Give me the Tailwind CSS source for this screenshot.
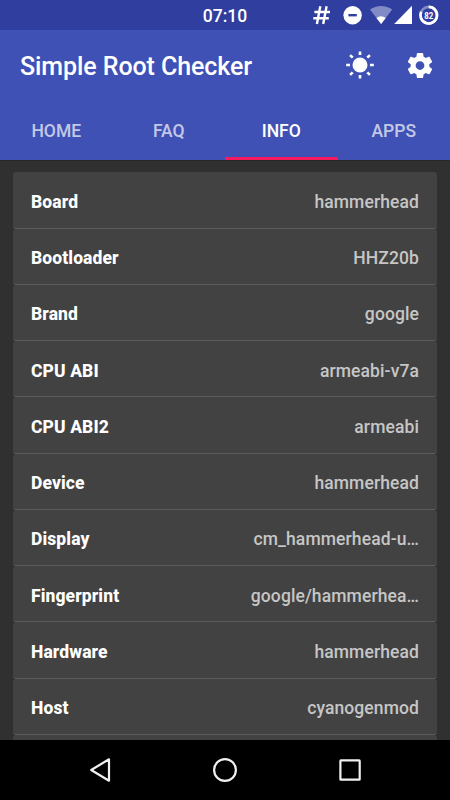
<!DOCTYPE html>
<html lang="en">
<head>
<meta charset="utf-8">
<title>Simple Root Checker</title>
<script src="https://cdn.jsdelivr.net/npm/@tailwindcss/browser@4"></script>
</head>
<body class="bg-black">
<div class="flex h-[800px] w-[450px] flex-col overflow-hidden bg-[#303030] font-['Roboto',sans-serif]">
  <div class="grid h-[30px] shrink-0 grid-cols-[1fr_auto_1fr] items-center bg-[#303f9f] text-white">
    <span></span>
    <span class="pt-[2px] text-[17.5px] leading-[28px] font-medium">07:10</span>
    <svg class="ml-auto h-[30px] w-[150px]" viewBox="300 0 150 30" fill="none">
      <path d="M320.3 6.3 316.9 24M326.6 6.3 323.2 24M314.4 12H330M313.3 18.3H328.8" stroke="#fff" stroke-width="2.4"/>
      <circle cx="352.6" cy="15.2" r="9.2" fill="#fff"/>
      <path d="M348.4 15.2H356.8" stroke="#303f9f" stroke-width="2.4"/>
      <path d="M370 9.6C376.5 4.7 385.7 4.7 392.2 9.6L381.1 24Z" fill="#fff" fill-opacity=".4"/>
      <path d="M376.5 17.9Q381.1 14.5 385.7 17.9L381.1 24Z" fill="#fff"/>
      <path d="M394.2 24H412V5.8Z" fill="#fff"/>
      <circle cx="428.7" cy="15.2" r="8.3" stroke="#fff" stroke-opacity=".4" stroke-width="2.6"/>
      <path d="M428.7 6.9A8.3 8.3 0 1 1 421.2 11.7" stroke="#fff" stroke-width="2.7"/>
      <text x="428.7" y="18.6" text-anchor="middle" fill="#fff" font-size="9.5" font-weight="700" textLength="9" lengthAdjust="spacingAndGlyphs" class="font-['Roboto',sans-serif]">82</text>
    </svg>
  </div>
  <header class="flex h-[130px] shrink-0 flex-col bg-[#3f51b5] text-white">
    <div class="flex h-[71px] items-center pr-[15px] pl-5">
      <h1 class="pt-[2px] text-[25px] leading-[30px] font-medium tracking-[-0.08px] whitespace-nowrap">Simple Root Checker</h1>
      <svg class="ml-auto h-[30px] w-[30px]" viewBox="-15 -14 30 30" stroke="#fff" stroke-width="2.6">
        <circle r="7.5" fill="#fff" stroke="none"/>
        <path d="M0-13.6V-10M0 13.6V10M-13.8 0H-10M13.8 0H10M-9.9-9.9-7.3-7.3M9.9 9.9 7.3 7.3M-9.9 9.9-7.3 7.3M9.9-9.9 7.3-7.3"/>
      </svg>
      <svg class="ml-[30px] h-[30px] w-[30px]" viewBox="0 .4 24 24" fill="#fff"><path d="M19.43 12.98c.04-.32.07-.64.07-.98s-.03-.66-.07-.98l2.11-1.65c.19-.15.24-.42.12-.64l-2-3.46c-.12-.22-.39-.3-.61-.22l-2.49 1c-.52-.4-1.08-.73-1.69-.98l-.38-2.65C14.46 2.18 14.25 2 14 2h-4c-.25 0-.46.18-.49.42l-.38 2.65c-.61.25-1.17.59-1.69.98l-2.49-1c-.23-.09-.49 0-.61.22l-2 3.46c-.13.22-.07.49.12.64l2.11 1.65c-.04.32-.07.65-.07.98s.03.66.07.98l-2.11 1.65c-.19.15-.24.42-.12.64l2 3.46c.12.22.39.3.61.22l2.49-1c.52.4 1.08.73 1.69.98l.38 2.65c.03.24.24.42.49.42h4c.25 0 .46-.18.49-.42l.38-2.65c.61-.25 1.17-.59 1.69-.98l2.49 1c.23.09.49 0 .61-.22l2-3.46c.12-.22.07-.49-.12-.64l-2.11-1.65zM12 15.5c-1.93 0-3.5-1.57-3.5-3.5s1.57-3.5 3.5-3.5 3.5 1.57 3.5 3.5-1.57 3.5-3.5 3.5z"/></svg>
    </div>
    <nav class="grid h-[59px] grid-cols-4 text-center text-[17.5px] leading-[56px] font-medium text-white/70">
      <span class="pt-[2px]">HOME</span><span class="pt-[2px]">FAQ</span><span class="h-[59px] border-b-[3px] border-[#f5195f] pt-[2px] text-white">INFO</span><span class="pt-[2px]">APPS</span>
    </nav>
  </header>
  <main class="min-h-0 grow overflow-hidden border-t border-[#282824] px-[13px] pt-[11.25px] text-[17.5px] leading-5 font-medium tracking-[0.1px] text-[#c6c6c6]">
    <div class="flex h-[56.25px] items-center justify-between rounded-[3px] border-b border-[#5c5c5c] bg-[#424242] px-[18px] pt-[4px]"><b class="font-extrabold text-white">Board</b><span>hammerhead</span></div>
    <div class="flex h-[56.25px] items-center justify-between rounded-[3px] border-b border-[#5c5c5c] bg-[#424242] px-[18px] pt-[4px]"><b class="font-extrabold text-white">Bootloader</b><span>HHZ20b</span></div>
    <div class="flex h-[56.25px] items-center justify-between rounded-[3px] border-b border-[#5c5c5c] bg-[#424242] px-[18px] pt-[4px]"><b class="font-extrabold text-white">Brand</b><span>google</span></div>
    <div class="flex h-[56.25px] items-center justify-between rounded-[3px] border-b border-[#5c5c5c] bg-[#424242] px-[18px] pt-[4px]"><b class="font-extrabold text-white">CPU ABI</b><span>armeabi-v7a</span></div>
    <div class="flex h-[56.25px] items-center justify-between rounded-[3px] border-b border-[#5c5c5c] bg-[#424242] px-[18px] pt-[4px]"><b class="font-extrabold text-white">CPU ABI2</b><span>armeabi</span></div>
    <div class="flex h-[56.25px] items-center justify-between rounded-[3px] border-b border-[#5c5c5c] bg-[#424242] px-[18px] pt-[4px]"><b class="font-extrabold text-white">Device</b><span>hammerhead</span></div>
    <div class="flex h-[56.25px] items-center justify-between rounded-[3px] border-b border-[#5c5c5c] bg-[#424242] px-[18px] pt-[4px]"><b class="font-extrabold text-white">Display</b><span>cm_hammerhead-u…</span></div>
    <div class="flex h-[56.25px] items-center justify-between rounded-[3px] border-b border-[#5c5c5c] bg-[#424242] px-[18px] pt-[4px]"><b class="font-extrabold text-white">Fingerprint</b><span>google/hammerhea…</span></div>
    <div class="flex h-[56.25px] items-center justify-between rounded-[3px] border-b border-[#5c5c5c] bg-[#424242] px-[18px] pt-[4px]"><b class="font-extrabold text-white">Hardware</b><span>hammerhead</span></div>
    <div class="flex h-[56.25px] items-center justify-between rounded-[3px] border-b border-[#5c5c5c] bg-[#424242] px-[18px] pt-[4px]"><b class="font-extrabold text-white">Host</b><span>cyanogenmod</span></div>
    <div class="h-[56.25px] rounded-[3px] bg-[#424242]"></div>
  </main>
  <footer class="h-[60px] shrink-0 bg-black">
    <svg class="h-[60px] w-[450px]" viewBox="0 740 450 60" fill="none" stroke="#f0f0f0" stroke-width="2.2" stroke-linejoin="round">
      <path d="M109 759.3V780.7L91.2 770Z"/>
      <circle cx="225" cy="770" r="10.9"/>
      <rect x="340.4" y="760.4" width="19.3" height="19.3" rx=".5"/>
    </svg>
  </footer>
</div>
</body>
</html>
